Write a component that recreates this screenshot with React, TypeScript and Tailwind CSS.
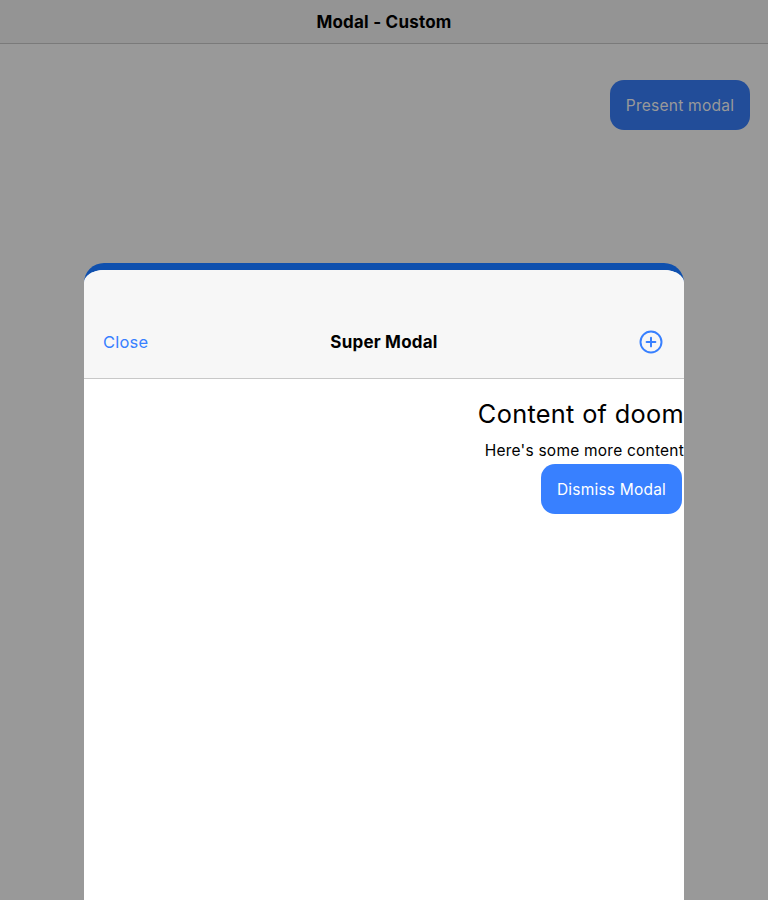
import React from "react";

export default function App() {
  return (
    <div className="relative h-[900px] w-full overflow-hidden bg-[#999999] font-['Inter',sans-serif] text-black antialiased">
      <header className="flex h-11 items-center justify-center border-b border-[#7a7a7a] bg-[#949494] pt-[2px]">
        <h1 className="text-[17px] font-bold tracking-[0.22px]">Modal - Custom</h1>
      </header>
      <main className="flex justify-end pt-9 pr-[18px]">
        <button className="h-[50px] w-[140px] rounded-[14px] bg-[#224d99] pt-px text-[15.6px] leading-[19px] tracking-[0.2px] text-[#999999]">Present modal</button>
      </main>
      <section className="absolute top-[263px] left-[84px] h-[637px] w-[600px] overflow-hidden rounded-t-[20px] border-t-[7px] border-[#0f50ae] bg-white">
        <header className="grid h-[109px] grid-cols-3 items-center border-b border-[#c8c8c8] bg-[#f7f7f7] px-[19px] pt-[36px]">
          <button className="justify-self-start text-[16.5px] leading-5 tracking-[0.2px] text-[#3880ff]">Close</button>
          <h2 className="text-center text-[17px] leading-5 font-bold tracking-[0.22px] whitespace-nowrap">Super Modal</h2>
          <button aria-label="Add" className="justify-self-end text-[#3880ff]">
            <svg className="size-[28px]" viewBox="0 0 512 512" fill="none" stroke="currentColor" strokeWidth="36">
              <path d="M448 256c0-106-86-192-192-192S64 150 64 256s86 192 192 192 192-86 192-192z" />
              <path d="M256 176v160M336 256H176" strokeLinecap="round" />
            </svg>
          </button>
        </header>
        <div className="flex flex-col items-end pt-[19px]">
          <h3 className="text-[25.3px] leading-[31px] tracking-[0.32px]">Content of doom</h3>
          <p className="mt-3 text-[15.5px] leading-[19px] tracking-[0.22px]">Here's some more content</p>
          <button className="mt-1 mr-[2px] h-[50px] w-[141px] rounded-[14px] bg-[#3880ff] pt-px text-[15.5px] leading-[19px] tracking-[0.2px] text-white">Dismiss Modal</button>
        </div>
      </section>
    </div>
  );
}
